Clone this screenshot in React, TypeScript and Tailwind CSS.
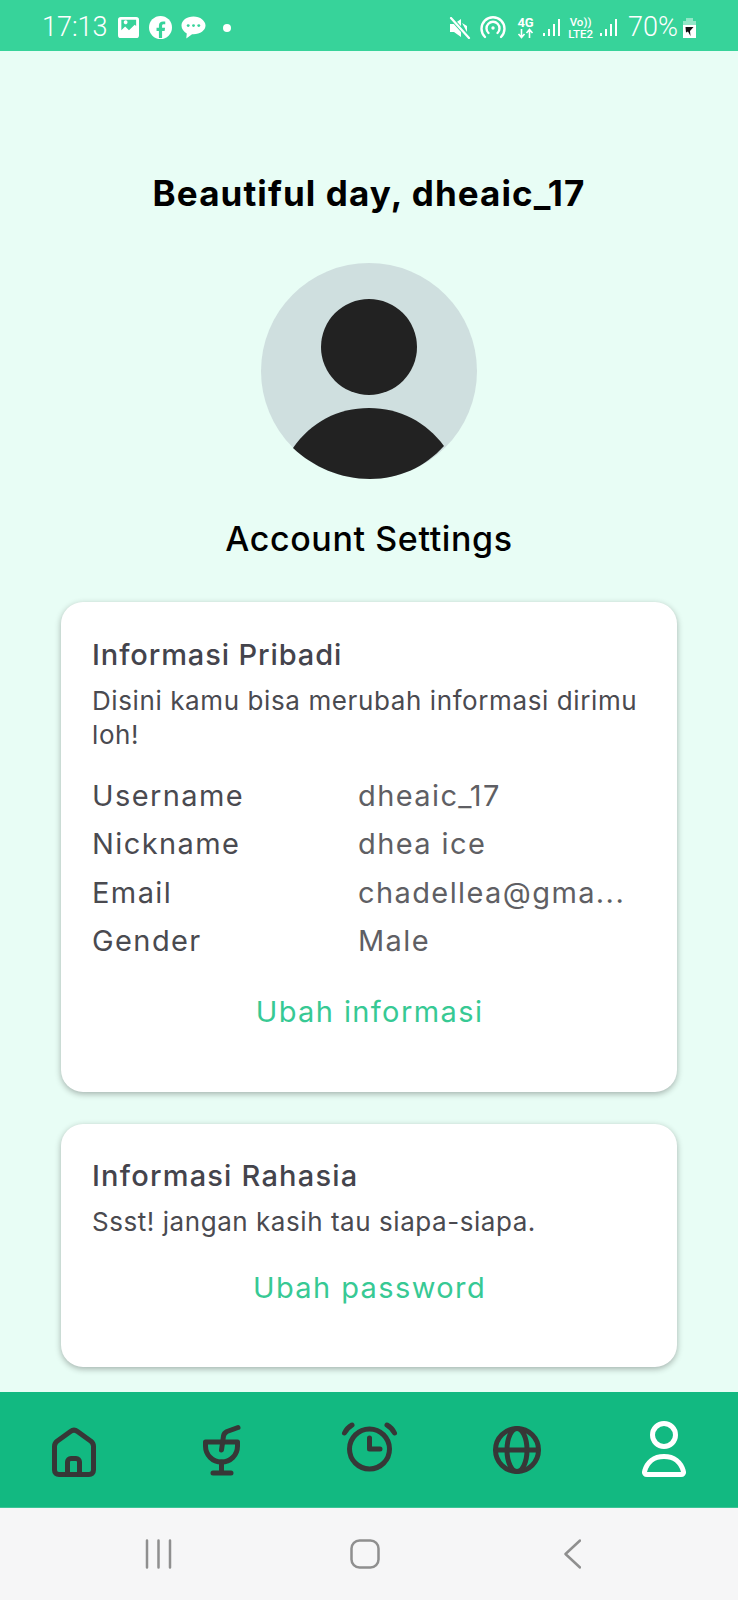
const rows = [
  ['Username', 'dheaic_17'],
  ['Nickname', 'dhea ice'],
  ['Email', 'chadellea@gma...'],
  ['Gender', 'Male'],
]

function Bars({ className }: { className: string }) {
  return (
    <svg viewBox="0 0 20 20" className={`size-[20px] ${className}`} fill="white">
      <rect x="1" y="15" width="2" height="3" />
      <rect x="6" y="11" width="2" height="7" />
      <rect x="11" y="6" width="2" height="12" />
      <rect x="16" y="1" width="2" height="17" />
    </svg>
  )
}

function StatusBar() {
  return (
    <div className="flex h-[51px] shrink-0 items-center justify-between bg-[#37d39a] pl-[42px] pr-[41px] pt-[4px] text-white" style={{ fontFamily: 'Roboto, sans-serif' }}>
      <div className="flex items-center">
        <span className="text-[27px] font-light leading-none">17:13</span>
        <svg viewBox="0 0 22 22" className="ml-[10px] size-[21px]" fill="white">
          <path fillRule="evenodd" d="M3 0h16a3 3 0 0 1 3 3v16a3 3 0 0 1-3 3H3a3 3 0 0 1-3-3V3a3 3 0 0 1 3-3Zm.5 3v11l4-4 4 4 6-6 1.500 1.500V3ZM6 5.500a2 2 0 1 1 0 .01Z" />
        </svg>
        <span className="ml-[10px] flex size-[23px] items-center justify-center rounded-full bg-white">
          <svg viewBox="0 0 24 24" className="size-[19px] translate-y-[1px]" fill="#37d39a">
            <path d="M14 24v-9h3.200l.6-4H14V8.600c0-1.200.5-2 2-2h2V3.100C17.400 3 16.300 3 15.300 3 12.300 3 10 4.800 10 8.100V11H7v4h3v9Z" />
          </svg>
        </span>
        <svg viewBox="0 0 26 25" className="ml-[9px] h-[25px] w-[25px]" fill="white">
          <path d="M13 1C6 1 .5 5 .5 10.500c0 3.500 2.300 6.500 5.500 8.200L5.500 24l6-4.500h1.500c7 0 12.500-4 12.500-9S20 1 13 1Z" />
          <circle cx="7.500" cy="10.500" r="1.500" fill="#37d39a" />
          <circle cx="13" cy="10.500" r="1.500" fill="#37d39a" />
          <circle cx="18.500" cy="10.500" r="1.500" fill="#37d39a" />
        </svg>
        <span className="ml-[17px] size-[8px] rounded-full bg-white" />
      </div>
      <div className="flex items-center">
        <svg viewBox="0 0 22 22" className="size-[22px]" fill="white">
          <path d="M1 7h4l7-5v18l-7-5H1Z" />
          <path d="M13 6l5 3v6z" />
          <path d="M2 1l18 20" stroke="#37d39a" strokeWidth="4" />
          <path d="M2 1l18 20" stroke="white" strokeWidth="2.200" strokeLinecap="round" />
        </svg>
        <svg viewBox="0 0 26 26" className="ml-[9px] size-[26px]" fill="none" stroke="white" strokeWidth="2.400" strokeLinecap="round">
          <path d="M5 22A11.500 11.500 0 1 1 21 22" />
          <path d="M8.500 18A6.500 6.500 0 1 1 17.500 18" />
          <circle cx="13" cy="13" r="1.700" fill="white" stroke="none" />
        </svg>
        <div className="ml-[11px] flex w-[17px] flex-col items-center text-[13px] font-bold leading-[11px]">
          <span>4G</span>
          <svg viewBox="0 0 17 11" className="h-[11px] w-[17px]" fill="none" stroke="white" strokeWidth="1.600">
            <path d="M4.500 1v8M1.500 6l3 3.500 3-3.500M12.500 10V2M9.500 5l3-3.500 3 3.500" />
          </svg>
        </div>
        <Bars className="ml-[8px]" />
        <div className="ml-[5px] flex w-[27px] flex-col items-center text-[11.500px] font-medium leading-[12px]">
          <span>Vo))</span>
          <span>LTE2</span>
        </div>
        <Bars className="ml-[5px]" />
        <span className="ml-[9px] text-[27px] font-light leading-none">70%</span>
        <svg viewBox="0 0 15 22" className="ml-[4px] h-[22px] w-[15px]">
          <path d="M4 1h7v3h3v17H1V4h3Z" fill="white" opacity="0.45" />
          <rect x="1" y="8" width="13" height="13" fill="white" />
          <path d="M3.500 10h8L8 14l.5 5-2.500-4.500-2 1Z" fill="#111" />
        </svg>
      </div>
    </div>
  )
}

function Card({ children, className }: { children: React.ReactNode; className: string }) {
  return (
    <div className={`rounded-[22px] bg-white pl-[31px] pr-[30px] shadow-[0_2px_6px_rgba(0,0,0,0.3)] ${className}`}>
      {children}
    </div>
  )
}

function NavIcon({ children, white }: { children: React.ReactNode; white?: boolean }) {
  return (
    <svg viewBox="0 0 56 56" className="size-[56px] overflow-visible" fill="none" stroke={white ? 'white' : '#373737'} strokeWidth="5" strokeLinecap="round" strokeLinejoin="round">
      {children}
    </svg>
  )
}

function BottomNav() {
  return (
    <div className="flex h-[116px] shrink-0 items-center justify-between border-b border-[#3cc497] bg-[#12b981] pb-[2px] pl-[46px] pr-[44px]">
      <NavIcon>
        <path d="M8.500 49V25.500c0-2 1-4 2.500-5.200L24.500 10.500c2-1.500 5-1.500 7 0L45 20.300c1.500 1.200 2.500 3.200 2.500 5.200V49c0 3-2 4.500-4.500 4.500H13c-2.500 0-4.500-1.500-4.500-4.500Z" />
        <path d="M21.500 53V41c0-2 1.500-3.500 3.500-3.500h5c2 0 3.500 1.500 3.500 3.500v12" />
      </NavIcon>
      <NavIcon>
        <path d="M11.500 21h32v4c0 9-7 16-16 16s-16-7-16-16Z" />
        <path d="M27.500 41v11M19 52h18" />
        <path d="M27.500 29L29.500 15c.5-3 1.500-3.500 3.500-4.500l11-4" />
      </NavIcon>
      <NavIcon>
        <circle cx="27.500" cy="28" r="20" />
        <path d="M27.500 17v11H38" />
        <path d="M2.500 12C4 9 6.500 6 10 4M52.500 12c-1.500-3-4-6-7.500-8" />
      </NavIcon>
      <NavIcon>
        <circle cx="27" cy="29" r="21.500" />
        <ellipse cx="27" cy="29" rx="10" ry="21.500" />
        <path d="M6 29h42" />
      </NavIcon>
      <NavIcon white>
        <circle cx="26" cy="14" r="11.500" />
        <path d="M9 53.500h34c1.800 0 3-1.500 2.500-3C43 41 36 35.500 26 35.500S9 41 6.500 50.500C6 52 7.200 53.500 9 53.500Z" />
      </NavIcon>
    </div>
  )
}

export default function App() {
  return (
    <div className="flex h-[1600px] w-[738px] flex-col overflow-hidden bg-[#e8fdf5]" style={{ fontFamily: 'Inter, "Noto Sans", sans-serif' }}>
      <StatusBar />
      <div className="flex flex-1 flex-col items-center">
        <h1 className="mt-[121px] text-[35px] font-bold leading-[42px] tracking-[1.1px] text-black">Beautiful day, dheaic_17</h1>
        <svg viewBox="0 0 216 216" className="mt-[49px] size-[216px]">
          <circle cx="108" cy="108" r="108" fill="#cfdfdf" />
          <circle cx="108" cy="84" r="48" fill="#222222" />
          <path d="M32 185C50 159 77 145 108 145s57 14 75 38c-19 21-45 33-74 33s-57-12-77-31Z" fill="#222222" />
        </svg>
        <h2 className="mt-[38px] text-[34px] font-medium leading-[44px] tracking-[0.6px] text-black">Account Settings</h2>

        <Card className="mt-[41px] h-[490px] w-[616px] pt-[33px]">
          <h3 className="text-[29px] font-medium leading-[40px] tracking-[0.9px] text-[#44444c]">Informasi Pribadi</h3>
          <p className="mt-[9px] text-[26px] leading-[34px] tracking-[0.6px] text-[#4a4a50]">Disini kamu bisa merubah informasi dirimu loh!</p>
          <div className="mt-[19px]">
            {rows.map(([label, value]) => (
              <div key={label} className="flex h-[48.500px] items-center text-[29px] tracking-[1.4px]">
                <span className="w-[266px] text-[#4a4a50]">{label}</span>
                <span className="text-[#5f5f64]">{value}</span>
              </div>
            ))}
          </div>
          <div className="mt-[27px] text-center text-[29px] leading-[40px] tracking-[1.4px] text-[#37c994]">Ubah informasi</div>
        </Card>

        <Card className="mt-[32px] h-[243px] w-[616px] pt-[32px]">
          <h3 className="text-[29px] font-medium leading-[40px] tracking-[1.2px] text-[#44444c]">Informasi Rahasia</h3>
          <p className="mt-[9px] text-[26px] leading-[34px] tracking-[0.55px] text-[#4a4a50]">Ssst! jangan kasih tau siapa-siapa.</p>
          <div className="mt-[29px] text-center text-[29px] leading-[40px] tracking-[1.4px] text-[#37c994]">Ubah password</div>
        </Card>
      </div>
      <BottomNav />
      <div className="flex h-[92px] shrink-0 items-center bg-[#f6f6f7] pl-[145px]">
        <svg viewBox="0 0 27 30" className="h-[30px] w-[27px]" stroke="#8f8f8f" strokeWidth="2.500" strokeLinecap="round">
          <path d="M2 1.500v27M13.500 1.500v27M25 1.500v27" />
        </svg>
        <svg viewBox="0 0 30 30" className="ml-[178px] size-[30px]" fill="none" stroke="#8f8f8f" strokeWidth="2.500">
          <rect x="1.500" y="1.500" width="27" height="27" rx="8" />
        </svg>
        <svg viewBox="0 0 17 30" className="ml-[184px] h-[30px] w-[17px]" fill="none" stroke="#8f8f8f" strokeWidth="2.500" strokeLinecap="round" strokeLinejoin="round">
          <path d="M16 1.500L1.500 15 16 28.500" />
        </svg>
      </div>
    </div>
  )
}
